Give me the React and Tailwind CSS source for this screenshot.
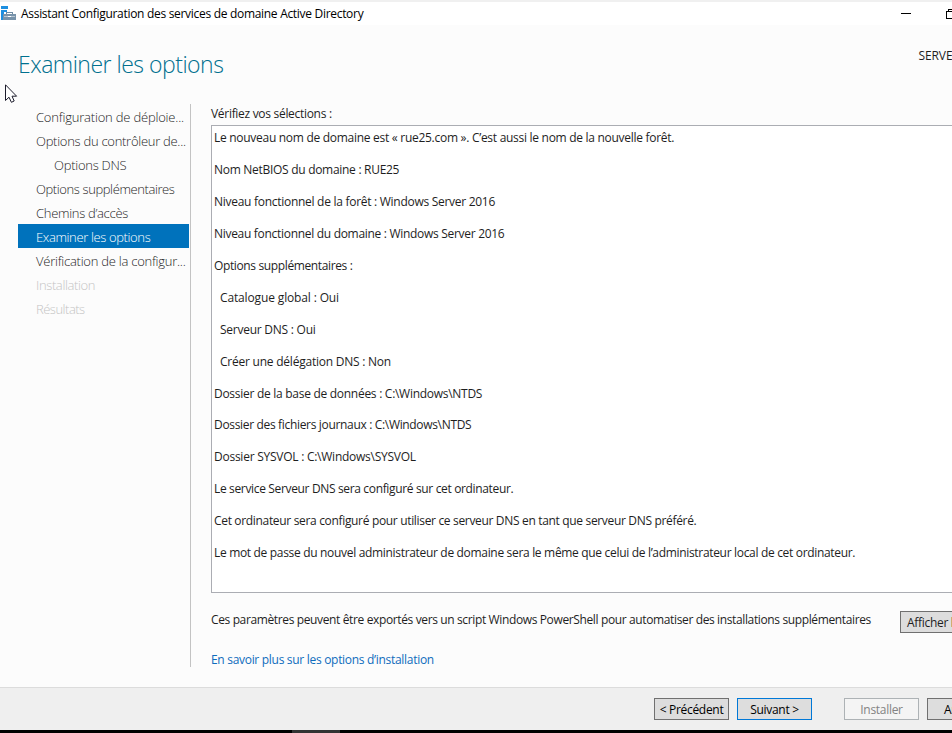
const steps = [
  { label: 'Configuration de déploie...', cls: 'pl-[18px] text-[#262626] tracking-[-0.2px]' },
  { label: 'Options du contrôleur de...', cls: 'pl-[18px] text-[#262626] tracking-[-0.28px]' },
  { label: 'Options DNS', cls: 'pl-[36px] text-[#262626] tracking-[-0.27px]' },
  { label: 'Options supplémentaires', cls: 'pl-[18px] text-[#262626] tracking-[-0.4px]' },
  { label: 'Chemins d’accès', cls: 'pl-[18px] text-[#262626] tracking-[-0.3px]' },
  { label: 'Examiner les options', cls: 'pl-[18px] bg-[#0072bc] text-white tracking-[-0.37px]' },
  { label: 'Vérification de la configur...', cls: 'pl-[18px] text-[#262626] tracking-[-0.25px]' },
  { label: 'Installation', cls: 'pl-[18px] text-[#c4c4c4] tracking-[-0.37px]' },
  { label: 'Résultats', cls: 'pl-[18px] text-[#c4c4c4] tracking-[-0.5px]' },
];

const lines = [
  { text: 'Le nouveau nom de domaine est « rue25.com ». C’est aussi le nom de la nouvelle forêt.', cls: 'h-8 tracking-[-0.285px]' },
  { text: 'Nom NetBIOS du domaine : RUE25', cls: 'h-8 tracking-[-0.29px]' },
  { text: 'Niveau fonctionnel de la forêt : Windows Server 2016', cls: 'h-8 tracking-[-0.28px]' },
  { text: 'Niveau fonctionnel du domaine : Windows Server 2016', cls: 'h-8 tracking-[-0.3px]' },
  { text: 'Options supplémentaires :', cls: 'h-8 tracking-[-0.37px]' },
  { text: 'Catalogue global : Oui', cls: 'h-8 pl-[6px] tracking-[-0.14px]' },
  { text: 'Serveur DNS : Oui', cls: 'h-8 pl-[6px] tracking-[-0.25px]' },
  { text: 'Créer une délégation DNS : Non', cls: 'h-8 pl-[6px] tracking-[-0.23px]' },
  { text: 'Dossier de la base de données : C:\\Windows\\NTDS', cls: 'h-[31px] tracking-[-0.28px]' },
  { text: 'Dossier des fichiers journaux : C:\\Windows\\NTDS', cls: 'h-8 tracking-[-0.33px]' },
  { text: 'Dossier SYSVOL : C:\\Windows\\SYSVOL', cls: 'h-8 tracking-[-0.25px]' },
  { text: 'Le service Serveur DNS sera configuré sur cet ordinateur.', cls: 'h-8 tracking-[-0.345px]' },
  { text: 'Cet ordinateur sera configuré pour utiliser ce serveur DNS en tant que serveur DNS préféré.', cls: 'h-8 tracking-[-0.33px]' },
  { text: 'Le mot de passe du nouvel administrateur de domaine sera le même que celui de l’administrateur local de cet ordinateur.', cls: 'h-8 tracking-[-0.32px]' },
];

function ToolboxIcon() {
  return (
    <svg width="15" height="15" viewBox="0 0 15 15" shapeRendering="crispEdges" className="shrink-0">
      <path d="M0 0h7v3H0zM0 4h6v2H3v8H0z" fill="#1e8fe0" />
      <path d="M5 6h7v1H5z" fill="#6f8ba3" />
      <path d="M5 7h1v2H5zM11 7h1v2h-1z" fill="#6f8ba3" />
      <path d="M2 8h13v6H2z" fill="#7893aa" />
      <path d="M6 7h5v1H6z" fill="#fff" />
      <path d="M3 10h4v1H3zM10 10h4v1h-4z" fill="#b9c7d3" />
      <path d="M7 10h3v1H7z" fill="#fff" />
    </svg>
  );
}

function Cursor() {
  return (
    <svg width="13" height="20" viewBox="0 0 13 20" className="absolute left-[5px] top-[84px]">
      <path d="M.5 .8V16.5L4 13.2L6.4 18.3L9.2 17L7 12.2H11.6Z" fill="#fff" stroke="#1c1c2c" strokeWidth="1" />
    </svg>
  );
}

export default function App() {
  return (
    <div className="relative flex h-[733px] w-[952px] flex-col overflow-hidden whitespace-nowrap bg-[#fcfcfc] font-['Open_Sans','Noto_Sans',sans-serif] text-xs leading-4 tracking-[-0.3px] text-[#1e1e1e]">
      <header className="flex h-[25px] shrink-0 items-center border-t-2 border-[#f0f0f0] bg-white">
        <div className="ml-px mt-[-1px] flex">
          <ToolboxIcon />
        </div>
        <span className="ml-[5px] text-black">Assistant Configuration des services de domaine Active Directory</span>
        <svg width="52" height="20" viewBox="0 0 52 20" shapeRendering="crispEdges" className="ml-auto shrink-0">
          <path d="M1 9h10v1H1z" fill="#000" />
          <path d="M46.500 7.500h8v7h-8zM48.500 7V5.500h8" fill="none" stroke="#000" />
        </svg>
      </header>

      <div className="flex h-[79px] shrink-0 justify-between pl-[18px]">
        <h1 className="mt-[23px] text-[23px] font-light leading-8 tracking-[-0.5px] text-[#00708f]">Examiner les options</h1>
        <span className="mt-[23px] w-[34px] overflow-hidden pl-[0.5px] tracking-[-0.1px]">SERVE</span>
      </div>

      <div className="flex min-h-0 flex-1">
        <nav className="ml-[18px] h-[563px] w-[173px] shrink-0 border-r border-[#c3c3c3] text-[13px] font-light">
          {steps.map((s) => (
            <div key={s.label} className={`mr-px flex h-6 items-center pt-px ${s.cls}`}>
              {s.label}
            </div>
          ))}
        </nav>

        <main className="ml-5 flex flex-1 flex-col">
          <div className="mt-[2px] h-[19px] shrink-0">Vérifiez vos sélections :</div>
          <div className="h-[468px] shrink-0 overflow-hidden border border-r-0 border-[#abadb3] bg-white pl-[2px] pt-[4px]">
            {lines.map((l) => (
              <p key={l.text} className={l.cls}>
                {l.text}
              </p>
            ))}
          </div>
          <div className="mt-[18px] flex h-[23px] shrink-0 justify-between">
            <span className="mt-px tracking-[-0.37px]">
              Ces paramètres peuvent être exportés vers un script Windows PowerShell pour automatiser des installations supplémentaires
            </span>
            <button className="h-[22px] w-[52px] shrink-0 overflow-hidden border border-r-0 border-[#707070] bg-[#dddddd] pl-[6px] pt-[2px] text-left">
              Afficher le script
            </button>
          </div>
          <a className="mt-[18px] tracking-[-0.3px] text-[#0f6cbd]">En savoir plus sur les options d’installation</a>
        </main>
      </div>

      <footer className="flex h-[43px] shrink-0 border-t border-[#dcdcdc] bg-[#efefef] pl-[654px] pt-[10px] text-black">
        <button className="h-[22px] w-[75px] shrink-0 border border-[#707070] bg-[#dddddd] pt-[2px]">&lt; Précédent</button>
        <button className="ml-2 h-[22px] w-[75px] shrink-0 border border-[#0078d7] bg-[#dddddd] pt-[2px]">Suivant &gt;</button>
        <button className="ml-8 h-[22px] w-[75px] shrink-0 border border-[#adb2b5] bg-[#f4f4f4] pt-[2px] text-[#838383]">Installer</button>
        <button className="ml-2 h-[22px] w-[25px] shrink-0 overflow-hidden border border-r-0 border-[#707070] bg-[#dddddd] pl-4 pt-[2px] text-left">
          Annuler
        </button>
      </footer>
      <div className="h-[3px] shrink-0 bg-black pl-[292px]">
        <div className="h-full w-12 bg-[#333]" />
      </div>
      <Cursor />
    </div>
  );
}
